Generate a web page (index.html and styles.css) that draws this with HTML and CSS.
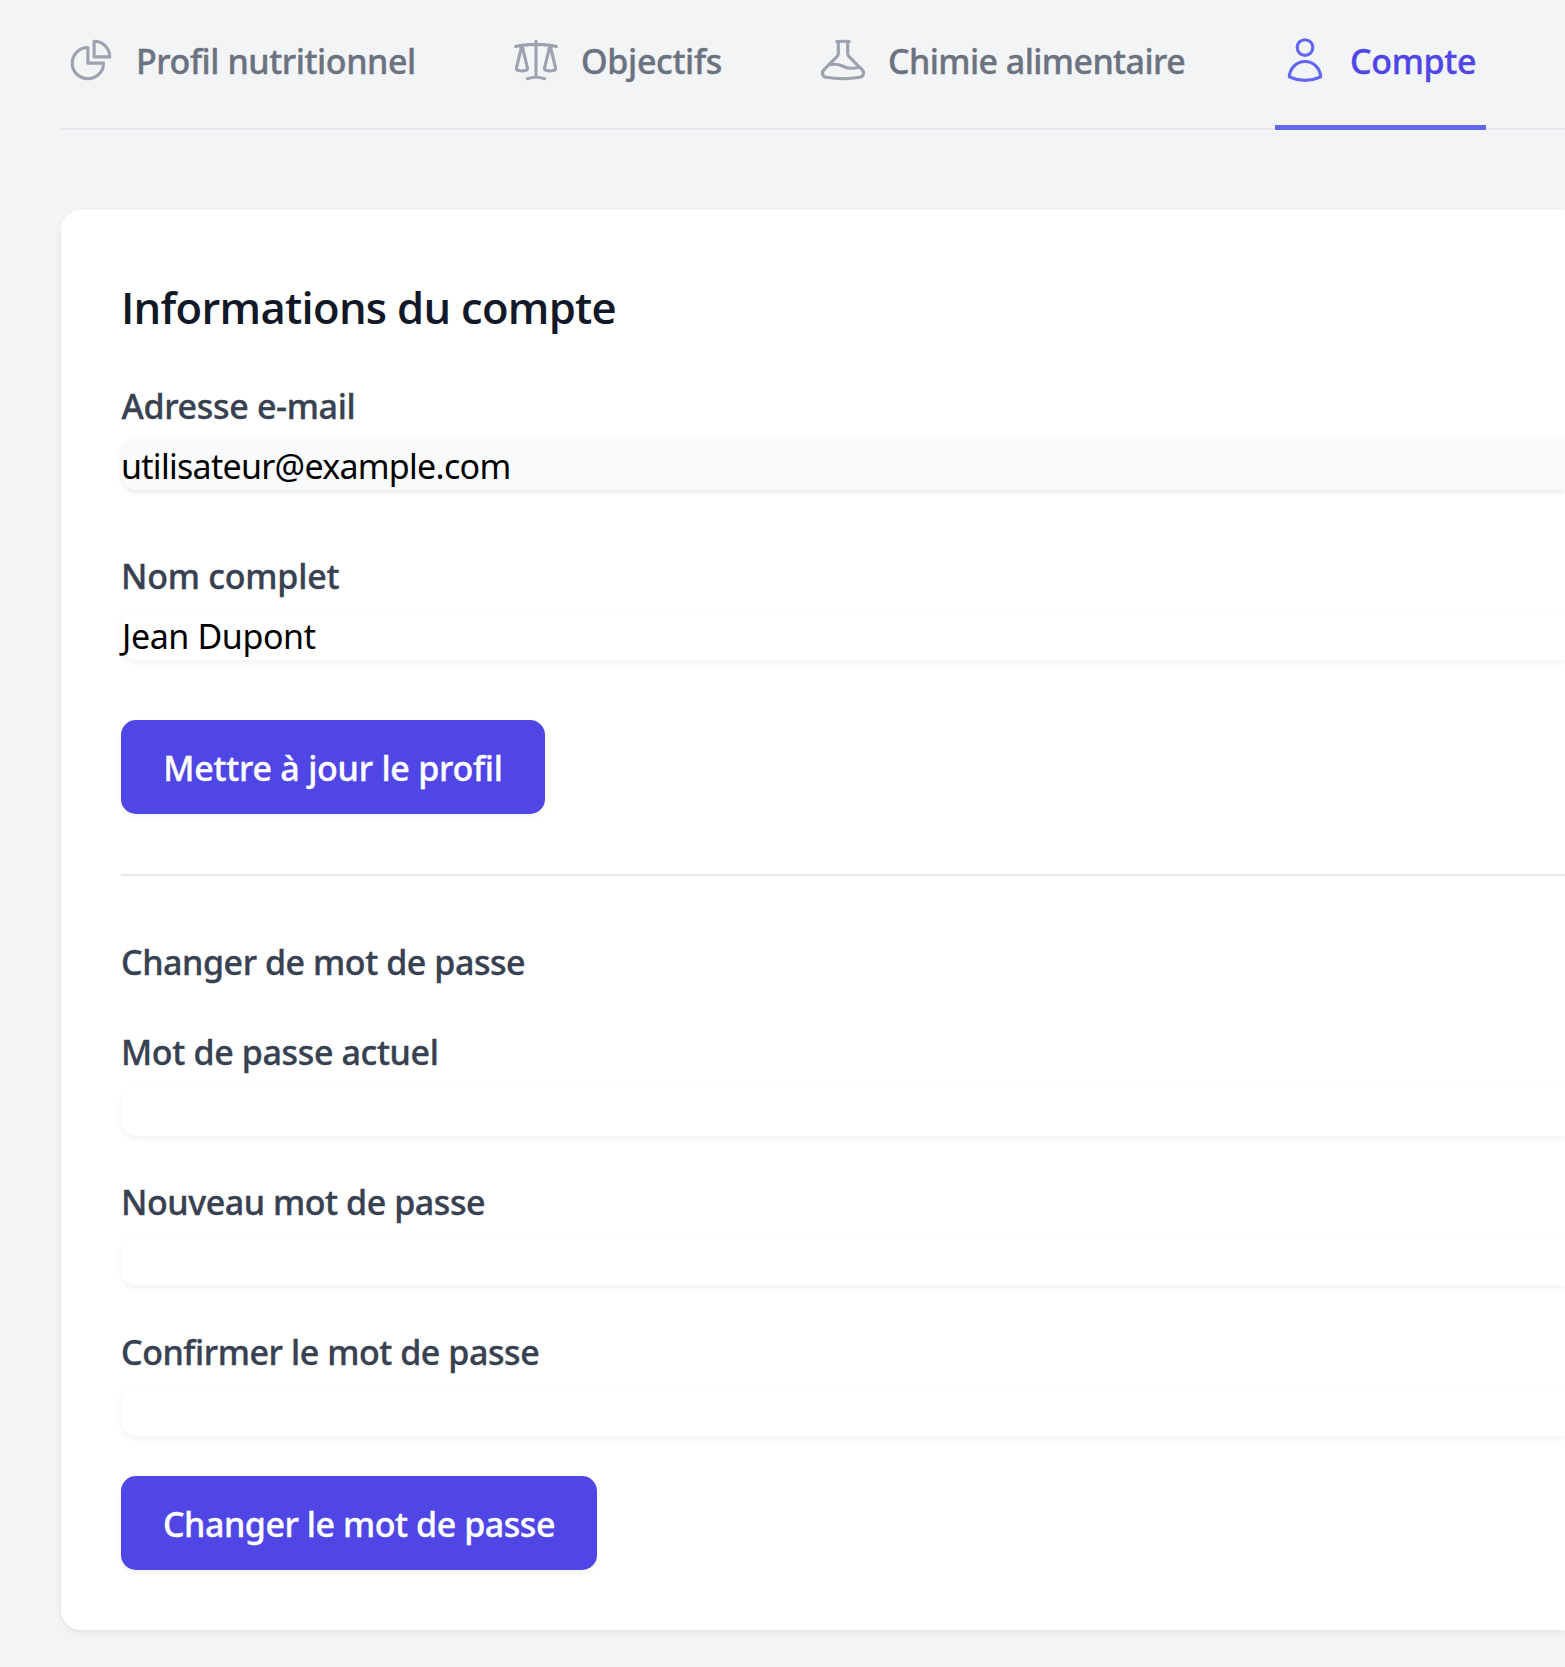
FILE: index.html
```html
<!DOCTYPE html>
<html lang="fr">
<head>
<meta charset="utf-8">
<title>Compte</title>
<link rel="stylesheet" href="styles.css">
</head>
<body>
<nav class="tabs">
  <a class="tab">
    <svg class="tab-icon" viewBox="0 0 24 24"><path d="M10.5 6a7.5 7.5 0 1 0 7.5 7.5h-7.5V6Z"/><path d="M13.5 10.5H21A7.5 7.5 0 0 0 13.5 3v7.5Z"/></svg>
    <span class="tab-text t-profil">Profil nutritionnel</span>
  </a>
  <a class="tab">
    <svg class="tab-icon" viewBox="0 0 24 24"><path d="M12 3v17.25m0 0c-1.472 0-2.882.265-4.185.75M12 20.25c1.472 0 2.882.265 4.185.75M18.75 4.97A48.416 48.416 0 0 0 12 4.5c-2.291 0-4.545.16-6.75.47m13.5 0c1.01.143 2.01.317 3 .52m-3-.52 2.62 10.726c.122.499-.106 1.028-.589 1.202a5.988 5.988 0 0 1-2.031.352 5.988 5.988 0 0 1-2.031-.352c-.483-.174-.711-.703-.59-1.202L18.75 4.971Zm-16.5.52c.99-.203 1.99-.377 3-.52m0 0 2.62 10.726c.122.499-.106 1.028-.589 1.202a5.989 5.989 0 0 1-2.031.352 5.989 5.989 0 0 1-2.031-.352c-.483-.174-.711-.703-.59-1.202L5.25 4.971Z"/></svg>
    <span class="tab-text t-objectifs">Objectifs</span>
  </a>
  <a class="tab">
    <svg class="tab-icon" viewBox="0 0 24 24"><path d="M9.75 3.104v5.714a2.25 2.25 0 0 1-.659 1.591L5 14.5M9.75 3.104c-.251.023-.501.05-.75.082m.75-.082a24.301 24.301 0 0 1 4.5 0m0 0v5.714c0 .597.237 1.17.659 1.591L19.8 15.3M14.25 3.104c.251.023.501.05.75.082M19.8 15.3l-1.57.393A9.065 9.065 0 0 1 12 15a9.065 9.065 0 0 0-6.23-.693L5 14.5m14.8.8 1.402 1.402c1.232 1.232.65 3.318-1.067 3.611A48.309 48.309 0 0 1 12 21c-2.773 0-5.491-.235-8.135-.687-1.718-.293-2.3-2.379-1.067-3.61L5 14.5"/></svg>
    <span class="tab-text t-chimie">Chimie alimentaire</span>
  </a>
  <a class="tab active">
    <svg class="tab-icon" viewBox="0 0 24 24"><path d="M15.75 6a3.75 3.75 0 1 1-7.5 0 3.75 3.75 0 0 1 7.5 0Z"/><path d="M4.501 20.118a7.5 7.5 0 0 1 14.998 0A17.933 17.933 0 0 1 12 21.75c-2.676 0-5.216-.584-7.499-1.632Z"/></svg>
    <span class="tab-text t-compte">Compte</span>
  </a>
</nav>
<main class="card">
  <h2 class="title">Informations du compte</h2>
  <form class="profile">
    <div class="field"><label class="label l-email">Adresse e-mail</label><div class="input filled i-email">utilisateur@example.com</div></div>
    <div class="field"><label class="label l-nom">Nom complet</label><div class="input i-nom">Jean Dupont</div></div>
    <button type="button" class="btn b-profil">Mettre à jour le profil</button>
  </form>
  <form class="password">
    <h3 class="label l-section">Changer de mot de passe</h3>
    <div class="field"><label class="label l-actuel">Mot de passe actuel</label><div class="input"></div></div>
    <div class="field"><label class="label">Nouveau mot de passe</label><div class="input"></div></div>
    <div class="field"><label class="label">Confirmer le mot de passe</label><div class="input"></div></div>
    <button type="button" class="btn b-mdp">Changer le mot de passe</button>
  </form>
</main>
</body>
</html>
```
FILE: styles.css
```css
* { box-sizing: border-box; }

body {
  margin: 0;
  height: 1667px;
  overflow: hidden;
  background: #f3f4f6;
  font-family: "Noto Sans", "Open Sans", sans-serif;
  font-size: 34px;
  line-height: 50px;
}

/* Tab bar */
.tabs {
  display: flex;
  gap: 80px;
  height: 130px;
  margin-left: 61px;
  padding-top: 35px;
  box-shadow: inset 0 -2px #e5e7eb;
}
.tab {
  display: flex;
  flex: none;
  width: 365px;
  padding: 0 10px;
  color: #6b7280;
  font-weight: 500;
  white-space: nowrap;
}
.tab:nth-child(2) { width: 227px; }
.tab:nth-child(3) { width: 382px; }
.tab.active { width: 211px; color: #4f46e5; border-bottom: 5px solid #6366f1; }
.tab-icon {
  flex: none;
  width: 50px;
  height: 50px;
  margin: 0 20px 0 -5px;
  fill: none;
  stroke: #9ca3af;
  stroke-width: 1.5;
  stroke-linecap: round;
  stroke-linejoin: round;
}
.active .tab-icon { stroke: #6366f1; }
.tab-text { padding-top: 1px; -webkit-text-stroke: 0.35px; }
.t-profil { letter-spacing: -0.44px; }
.t-objectifs { letter-spacing: -0.34px; }
.t-chimie { letter-spacing: -0.58px; }
.t-compte { letter-spacing: -0.33px; }

/* Card */
.card {
  height: 1420px;
  margin: 80px 0 0 61px;
  padding: 67px 0 60px 60px;
  background: #fff;
  border-radius: 20px 0 0 20px;
  box-shadow: 0 2.5px 7.5px rgba(0, 0, 0, 0.05), 0 2.5px 5px -2.5px rgba(0, 0, 0, 0.05);
}
.title {
  height: 62px;
  margin: 0;
  color: #111827;
  font: 600 43.6px/60px "Open Sans", sans-serif;
  letter-spacing: -0.72px;
}
.profile { padding: 40px 0 60px; border-bottom: 2px solid #e5e7eb; }
.field { margin-bottom: 59px; }
.label {
  display: block;
  margin: 0;
  padding-top: 2px;
  color: #374151;
  font-size: 34px;
  font-weight: 500;
  letter-spacing: -0.44px;
  -webkit-text-stroke: 0.35px;
}
.l-email { letter-spacing: -0.32px; text-indent: 0.5px; }
.l-nom { letter-spacing: -0.22px; }
.l-section { height: 52px; padding-top: 3px; }
.l-actuel { letter-spacing: -0.36px; }
.input {
  height: 51px;
  margin-top: 8px;
  border-radius: 15px 0 0 15px;
  background: #fff;
  color: #000;
  line-height: 55px;
  white-space: nowrap;
  box-shadow: 0 2.5px 5px rgba(0, 0, 0, 0.05);
}
.filled { background: #f9fafb; box-shadow: 0 2.5px 5px rgba(0, 0, 0, 0.08); }
.i-email { letter-spacing: -0.72px; }
.i-nom { letter-spacing: -0.4px; text-indent: 1px; }
.btn {
  display: block;
  height: 94px;
  padding: 2px 0 0;
  border: 0;
  border-radius: 15px;
  background: #4f46e5;
  color: #fff;
  font: inherit;
  font-weight: 500;
  box-shadow: 0 2.5px 5px rgba(0, 0, 0, 0.05);
  -webkit-text-stroke: 0.35px;
}
.b-profil { width: 424px; margin-top: 60px; letter-spacing: -0.25px; }
.b-mdp { width: 476px; letter-spacing: -0.45px; }
.password { padding-top: 58px; }
.password .field { margin: 39px 0 0; }
.password .btn { margin-top: 40px; }
```
